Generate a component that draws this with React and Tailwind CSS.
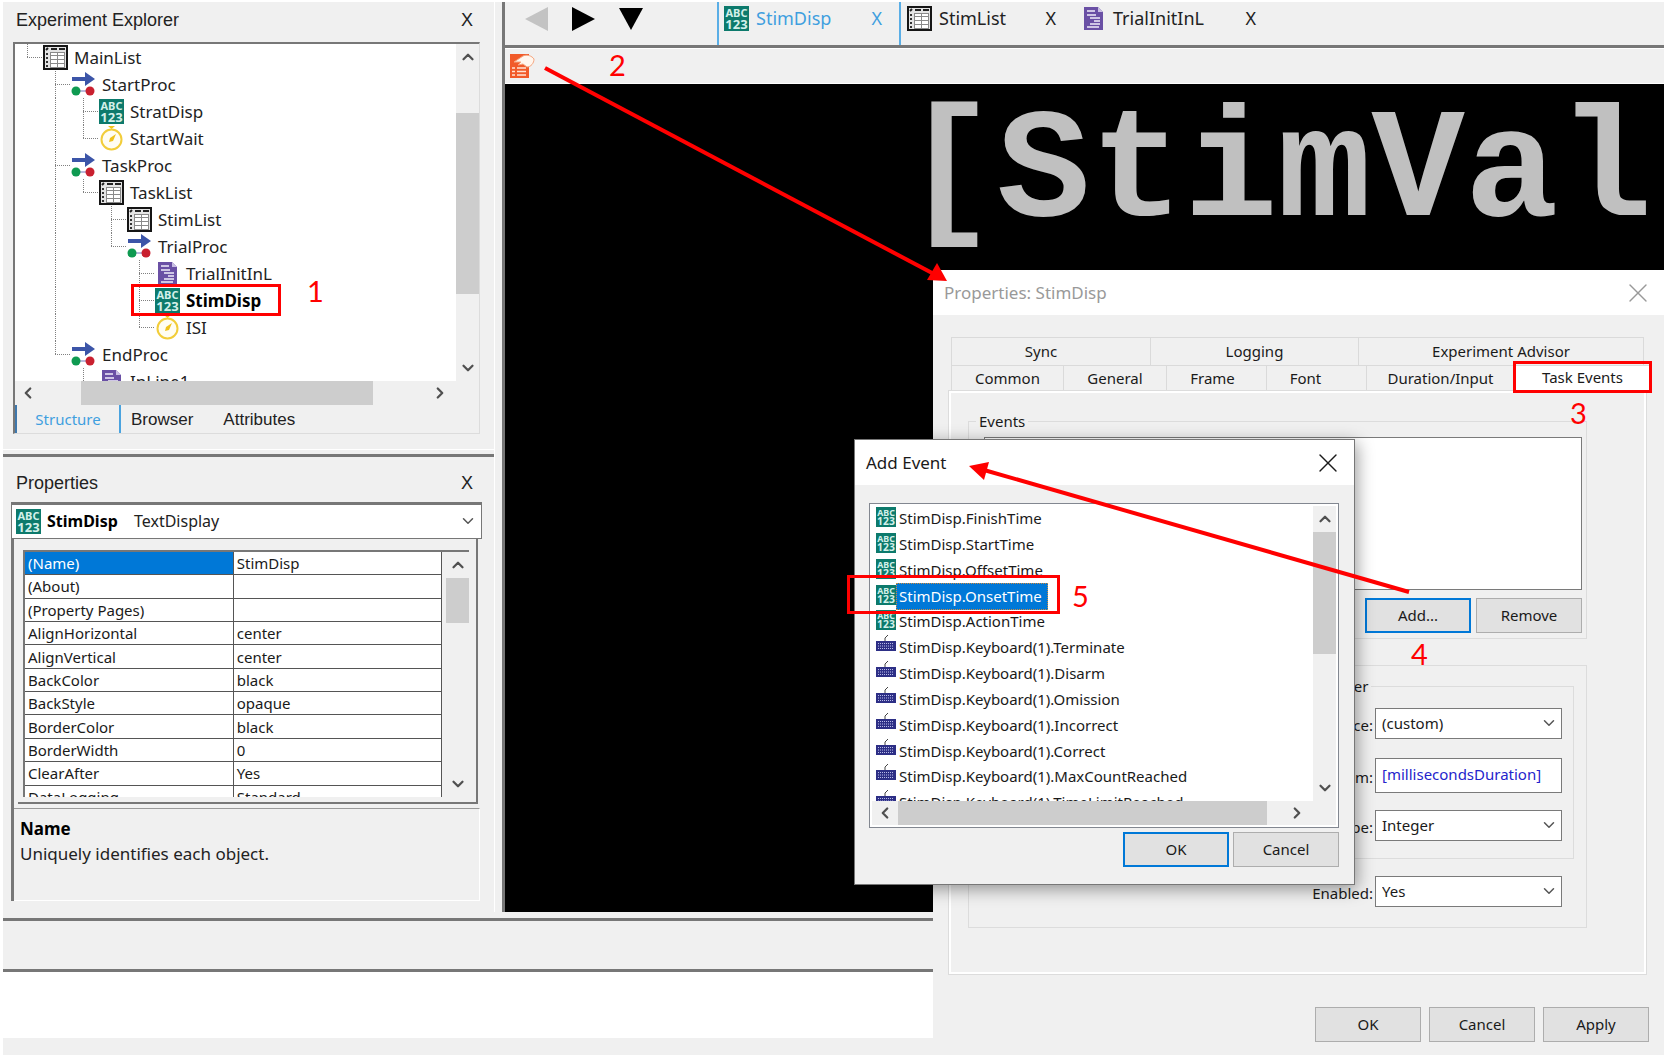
import React from "react";
import { ChevronDown, ChevronLeft, ChevronRight, ChevronUp, X } from "lucide-react";

const treeRows = [
  { name: "MainList", icon: "list", guides: "L" },
  { name: "StartProc", icon: "proc", guides: " T" },
  { name: "StratDisp", icon: "text", guides: " IT" },
  { name: "StartWait", icon: "wait", guides: " IL" },
  { name: "TaskProc", icon: "proc", guides: " T" },
  { name: "TaskList", icon: "list", guides: " IL" },
  { name: "StimList", icon: "list", guides: " I T" },
  { name: "TrialProc", icon: "proc", guides: " I L" },
  { name: "TrialInitInL", icon: "inline", guides: " I  T" },
  { name: "StimDisp", icon: "text", guides: " I  T", selected: true },
  { name: "ISI", icon: "wait", guides: " I  L" },
  { name: "EndProc", icon: "proc", guides: " L" },
  { name: "InLine1", icon: "inline", guides: "  L" },
];

const properties = [
  ["(Name)", "StimDisp"],
  ["(About)", ""],
  ["(Property Pages)", ""],
  ["AlignHorizontal", "center"],
  ["AlignVertical", "center"],
  ["BackColor", "black"],
  ["BackStyle", "opaque"],
  ["BorderColor", "black"],
  ["BorderWidth", "0"],
  ["ClearAfter", "Yes"],
  ["DataLogging", "Standard"],
];

const events = [
  "FinishTime",
  "StartTime",
  "OffsetTime",
  "OnsetTime",
  "ActionTime",
  "Keyboard(1).Terminate",
  "Keyboard(1).Disarm",
  "Keyboard(1).Omission",
  "Keyboard(1).Incorrect",
  "Keyboard(1).Correct",
  "Keyboard(1).MaxCountReached",
  "Keyboard(1).TimeLimitReached",
];

/* ---------- icons ---------- */

const TextIcon = ({ className = "size-[25px]" }) => (
  <svg viewBox="0 0 25 25" className={`${className} shrink-0`} aria-hidden="true">
    <rect width="25" height="25" fill="#0d7a6c" />
    <g fill="#d3f0ea" fontFamily="Noto Sans, sans-serif" fontWeight="700" textAnchor="middle">
      <text x="12.5" y="11" fontSize="11">ABC</text>
      <text x="12.5" y="23" fontSize="13">123</text>
    </g>
  </svg>
);

const ListIcon = () => (
  <svg viewBox="0 0 25 25" className="size-[25px] shrink-0" aria-hidden="true">
    <rect x="1" y="1" width="23" height="23" fill="#e4e4e4" stroke="#151515" strokeWidth="2" />
    <path d="M3 5l2-2M8 4h6M16 4h6" stroke="#222" strokeWidth="2" />
    <path d="M4 8v15" stroke="#333" strokeWidth="2" strokeDasharray="2 2" />
    <rect x="7" y="7" width="15" height="16" fill="#8a8a8a" />
    <path
      d="M8 8h6v2h-6zM15 8h6v2h-6zM8 11h6v3h-6zM15 11h6v3h-6zM8 15h6v3h-6zM15 15h6v3h-6zM8 19h6v3h-6zM15 19h6v3h-6z"
      fill="#fff"
    />
  </svg>
);

const ProcIcon = () => (
  <svg viewBox="0 0 25 25" className="size-[25px] shrink-0" aria-hidden="true">
    <path d="M1 5h13V0l10 7l-10 7V9H1z" fill="#3c55a8" />
    <path d="M5 19h14" stroke="#b9b9dd" strokeWidth="2" />
    <circle cx="5" cy="19" r="4.500" fill="#0f9a51" />
    <circle cx="19" cy="19" r="4.500" fill="#c9202f" />
  </svg>
);

const WaitIcon = () => (
  <svg viewBox="0 0 25 25" className="size-[25px] shrink-0" aria-hidden="true">
    <path d="M9 0h7l-3.500 3z" fill="#f0c419" />
    <circle cx="12.500" cy="13.500" r="10" fill="#fffdf2" stroke="#f2cd3a" strokeWidth="2" />
    <path d="M17 8l-3 7l-4 1l1-4z" fill="#efc21b" />
  </svg>
);

const InlineIcon = () => (
  <svg viewBox="0 0 25 25" className="size-[25px] shrink-0" aria-hidden="true">
    <path d="M3 1h14l5 5v18H3z" fill="#6a50a5" />
    <path d="M17 1v5h5z" fill="#c9bfe3" />
    <path d="M6 5h8M6 9h9M9 12h10M13 15h6M9 18h10M6 21h12" stroke="#f1edfa" strokeWidth="1.500" />
  </svg>
);

const KeyboardIcon = () => (
  <svg viewBox="0 0 20 20" className="size-5 shrink-0" aria-hidden="true">
    <path d="M9 6V3l3-3" fill="none" stroke="#444" />
    <rect y="6" width="20" height="10" fill="#2d2f86" />
    <path d="M2 8.500h16M2 11h16M2 13.500h16" stroke="#b9bbe8" strokeDasharray="1 1" />
  </svg>
);

const PagesIcon = () => (
  <svg viewBox="0 0 26 26" className="size-[26px] shrink-0" aria-hidden="true">
    <path d="M1 1h19v24H1z" fill="#f15a29" />
    <path d="M5 9l9-6c4-2 9 0 11 3c0 4-3 8-7 8l-4-3l-5 1l3-3z" fill="#fff6ee" stroke="#f5a57f" />
    <path d="M3 15h3M8 15h9M3 18.500h3M8 18.500h9M3 22h3M8 22h9" stroke="#ffe3d3" strokeWidth="1.500" />
  </svg>
);

const icons = { list: ListIcon, proc: ProcIcon, text: TextIcon, wait: WaitIcon, inline: InlineIcon };

/* ---------- shared parts ---------- */

const VScroll = ({ thumb }) => (
  <div className="flex w-[23px] shrink-0 flex-col items-center bg-[#f0f0f0] text-[#505050]">
    <button aria-label="Scroll up" className="flex h-[26px] items-center">
      <ChevronUp size={18} strokeWidth={3} />
    </button>
    <div className="w-full flex-1">
      <div className={`w-full bg-[#cdcdcd] ${thumb}`} />
    </div>
    <button aria-label="Scroll down" className="flex h-[26px] items-center">
      <ChevronDown size={18} strokeWidth={3} />
    </button>
  </div>
);

const HScroll = ({ thumb }) => (
  <div className="flex h-6 items-center bg-[#f0f0f0] pr-[26px] text-[#505050]">
    <button aria-label="Scroll left" className="flex w-[26px] justify-center">
      <ChevronLeft size={18} strokeWidth={3} />
    </button>
    <div className="h-full flex-1">
      <div className={`h-full bg-[#cdcdcd] ${thumb}`} />
    </div>
    <button aria-label="Scroll right" className="flex w-[26px] justify-center">
      <ChevronRight size={18} strokeWidth={3} />
    </button>
  </div>
);

const Button = ({ children, primary }) => (
  <button
    className={`h-[35px] w-[106px] bg-[#e1e1e1] text-[15px] ${
      primary ? "border-2 border-[#0078d7]" : "border border-[#adadad]"
    }`}
  >
    {children}
  </button>
);

const Guide = ({ kind }) => (
  <svg viewBox="0 0 28 27" className="h-[27px] w-7 shrink-0" aria-hidden="true">
    <g stroke="#808080" strokeDasharray="1 1">
      {kind !== " " && <path d={kind === "L" ? "M12.500 0v14" : "M12.500 0v27"} />}
      {(kind === "T" || kind === "L") && <path d="M12 13.500h16" />}
    </g>
  </svg>
);

const PanelTitle = ({ children, className }) => (
  <div className={`flex items-center justify-between pr-[21px] pl-[13px] font-['Liberation_Sans',sans-serif] text-[18px] ${className}`}>
    <h2>{children}</h2>
    <button aria-label={`Close ${children}`}>X</button>
  </div>
);

/* ---------- left column ---------- */

const Explorer = () => (
  <section className="border-b border-white pb-[15px]">
    <PanelTitle className="h-10 pb-1">Experiment Explorer</PanelTitle>
    <div className="mr-[14px] ml-[10px] border-t-2 border-r border-b border-l-2 border-t-[#777] border-r-[#dcdcdc] border-b-[#dcdcdc] border-l-[#777]">
      <div className="flex h-[337px] bg-white">
        <ul className="flex-1 overflow-hidden text-[17px]">
          {treeRows.map((row) => {
            const Icon = icons[row.icon];
            return (
              <li key={row.name} className="flex h-[27px] items-center">
                {row.guides.split("").map((kind, i) => (
                  <Guide key={i} kind={kind} />
                ))}
                <Icon />
                <span className={`pl-[6px] ${row.selected ? "font-bold text-black" : ""}`}>{row.name}</span>
              </li>
            );
          })}
        </ul>
        <VScroll thumb="mt-[43px] h-[181px]" />
      </div>
      <HScroll thumb="ml-10 w-[292px]" />
      <div className="flex h-7 items-center font-['Liberation_Sans',sans-serif] text-[17px]">
        <button className="h-full w-[106px] border-r-2 border-l-2 border-r-[#4aa3df] border-l-[#3f78ad] font-['Noto_Sans',sans-serif] text-[15px] text-[#3f9fdf]">
          Structure
        </button>
        <button className="pt-[2px] pl-[10px]">Browser</button>
        <button className="pt-[2px] pl-[30px]">Attributes</button>
      </div>
    </div>
  </section>
);

const PropertiesPanel = () => (
  <section className="mt-1 border-t-3 border-[#777]">
    <PanelTitle className="h-[45px] pt-2">Properties</PanelTitle>
    <div className="mr-3 ml-2 border-t-2 border-[#777]">
      <div className="relative flex h-[35px] items-center border border-[#777] bg-white px-1 pb-px text-[16px]">
        <TextIcon />
        <label htmlFor="object" className="pl-[6px]">
          <b className="pr-3 text-black">StimDisp</b> TextDisplay
        </label>
        <ChevronDown size={18} className="ml-auto text-[#555]" />
        <select id="object" className="absolute inset-0 w-full opacity-0">
          <option>StimDisp TextDisplay</option>
        </select>
      </div>
      <div className="border-l-3 border-[#777]">
        <div className="mr-1 ml-1 border-r-2 border-b-2 border-[#777] pt-[11px] pr-[7px] pb-[5px] pl-[5px]">
          <div className="flex h-[247px] overflow-hidden border-t-2 border-l-2 border-[#777]">
            <div className="flex-1 overflow-hidden">
              <table className="h-[257px] w-full table-fixed border-collapse bg-white text-[15px] leading-5 text-[#1a1a1a]">
                <tbody>
                  {properties.map(([name, value], i) => (
                    <tr key={name}>
                      <th
                        scope="row"
                        className={`border-r border-b border-[#555] px-[3px] py-0 text-left font-normal ${
                          i === 0 ? "bg-[#0078d7] text-white" : ""
                        }`}
                      >
                        {name}
                      </th>
                      <td className="border-r border-b border-[#555] px-[3px] py-0">{value}</td>
                    </tr>
                  ))}
                </tbody>
              </table>
            </div>
            <div className="ml-1 flex">
              <VScroll thumb="h-[45px]" />
            </div>
          </div>
        </div>
        <div className="mt-1 mr-[2px] h-[93px] border-t border-r border-b border-t-[#999] border-r-white border-b-white px-[6px] pt-[7px] text-[17px] leading-[25px]">
          <p className="font-bold text-black">Name</p>
          <p>Uniquely identifies each object.</p>
        </div>
      </div>
    </div>
  </section>
);

/* ---------- editor ---------- */

const Editor = () => (
  <main className="flex flex-1 flex-col border-l-3 border-[#777]">
    <nav className="flex h-[46px] items-stretch border-b-3 border-[#777] text-[18px]">
      <div className="flex w-[212px] items-center gap-[23px] pb-[10px] pl-5">
        <button aria-label="Back">
          <svg viewBox="0 0 24 24" className="size-6" fill="#c3c3c3"><path d="M23 0v24L0 12z" /></svg>
        </button>
        <button aria-label="Forward">
          <svg viewBox="0 0 24 24" className="size-6" fill="#000"><path d="M0 0v24l23-12z" /></svg>
        </button>
        <button aria-label="Window list">
          <svg viewBox="0 0 24 24" className="size-6" fill="#000"><path d="M0 1h24L12 23z" /></svg>
        </button>
      </div>
      <div className="flex w-[184px] items-center border-x-2 border-[#5aaee6] pr-[17px] pb-[10px] pl-[5px] text-[#3f9fdf]">
        <TextIcon />
        <a href="#stimdisp" className="pl-[7px]">StimDisp</a>
        <button className="ml-auto" aria-label="Close StimDisp">X</button>
      </div>
      <div className="flex w-[175px] items-center pr-5 pb-[10px] pl-[6px]">
        <ListIcon />
        <a href="#stimlist" className="pl-[7px]">StimList</a>
        <button className="ml-auto" aria-label="Close StimList">X</button>
      </div>
      <div className="flex w-[180px] items-center pb-[10px] pl-[5px]">
        <InlineIcon />
        <a href="#trialinit" className="pl-[7px]">TrialInitInL</a>
        <button className="ml-auto" aria-label="Close TrialInitInL">X</button>
      </div>
    </nav>
    <div className="flex h-9 items-center border-t border-b border-white pl-1">
      <button aria-label="Property pages">
        <PagesIcon />
      </button>
    </div>
    <div className="flex-1 overflow-hidden bg-black pt-[10px] pr-3 text-right font-['Liberation_Mono',monospace] text-[156px] leading-[160px] font-bold text-[#c0c0c0]">
      [StimVal
    </div>
  </main>
);

/* ---------- dialogs ---------- */

const SelectField = ({ id, label, value, className = "" }) => (
  <div className={`flex items-center justify-end ${className}`}>
    <label htmlFor={id} className="pt-1 pr-[2px]">{label}</label>
    <div className="relative w-[187px]">
      <select id={id} className="h-[31px] w-full appearance-none border border-[#7a7a7a] bg-white pl-[6px]">
        <option>{value}</option>
      </select>
      <ChevronDown size={18} className="pointer-events-none absolute top-[6px] right-1 text-[#555]" />
    </div>
  </div>
);

const Tab = ({ children, className }) => (
  <button className={`border-r border-[#dadada] ${className}`}>{children}</button>
);

const PropertiesDialog = () => (
  <div
    role="dialog"
    aria-label="Properties: StimDisp"
    className="absolute top-[270px] right-1 left-[933px] bg-[#f0f0f0] text-[15px] text-[#1a1a1a]"
  >
    <div className="flex h-[45px] items-center justify-between bg-white pr-[10px] pl-[11px] text-[17px] text-[#999]">
      <h2>Properties: StimDisp</h2>
      <button aria-label="Close">
        <X size={32} strokeWidth={1} />
      </button>
    </div>
    <div className="mt-[22px] mr-[20px] ml-[18px] flex h-7 border-t border-l border-[#dadada]">
      <Tab className="w-[199px] pr-5">Sync</Tab>
      <Tab className="w-[208px]">Logging</Tab>
      <Tab className="flex-1">Experiment Advisor</Tab>
    </div>
    <div className="mr-[14px] ml-[18px] flex h-[26px] border-t border-l border-[#dadada]">
      <Tab className="w-[112px]">Common</Tab>
      <Tab className="w-[103px]">General</Tab>
      <Tab className="w-[100px] pr-2">Frame</Tab>
      <Tab className="w-[100px] pr-[22px]">Font</Tab>
      <Tab className="w-[148px]">Duration/Input</Tab>
      <button className="flex-1 bg-white pb-1">Task Events</button>
    </div>
    <div className="mr-[18px] ml-4 border-2 border-white px-[17px] pt-[18px] pb-[44px] outline outline-[#dcdcdc]">
      <fieldset className="mr-10 border border-[#dcdcdc] pr-[4px] pb-[5px] pl-[15px]">
        <legend className="-ml-[8px] px-[3px] leading-5">Events</legend>
        <div className="mt-[6px] h-[153px] border border-[#7a7a7a] bg-white" />
        <div className="mt-2 flex justify-end gap-[5px]">
          <Button primary>Add...</Button>
          <Button>Remove</Button>
        </div>
      </fieldset>
      <fieldset aria-label="Task event" className="mt-[26px] mr-10 border border-[#dcdcdc] pt-[10px] pb-[20px]">
        <fieldset className="mr-3 ml-auto w-[300px] border border-[#dcdcdc] pt-[12px] pr-[11px] pb-[17px]">
          <legend className="ml-[16px] px-[3px] leading-5">Parameter</legend>
          <SelectField id="source" label="Source:" value="(custom)" />
          <div className="mt-[19px] flex items-center justify-end">
            <label htmlFor="custom" className="pt-1 pr-[2px]">Custom:</label>
            <input
              id="custom"
              defaultValue="[millisecondsDuration]"
              className="h-[35px] w-[187px] border border-[#7a7a7a] bg-white pb-1 pl-[6px] text-[#2424cc]"
            />
          </div>
          <SelectField id="type" label="Type:" value="Integer" className="mt-[17px]" />
        </fieldset>
        <SelectField id="enabled" label="Enabled:" value="Yes" className="mt-[17px] pr-6" />
      </fieldset>
    </div>
    <div className="flex justify-end gap-2 pt-[33px] pr-[15px] pb-[13px]">
      <Button>OK</Button>
      <Button>Cancel</Button>
      <Button>Apply</Button>
    </div>
  </div>
);

const AddEventDialog = () => (
  <div
    role="dialog"
    aria-label="Add Event"
    className="absolute top-[439px] left-[854px] w-[501px] border border-[#777] bg-[#f0f0f0] text-[#1a1a1a] shadow-[2px_4px_16px_rgba(0,0,0,0.4)]"
  >
    <div className="flex h-[45px] items-center justify-between bg-white pr-[10px] pl-[11px] text-[17px]">
      <h2>Add Event</h2>
      <button aria-label="Close">
        <X size={32} strokeWidth={1} />
      </button>
    </div>
    <div className="mr-[15px] ml-[14px] mt-[18px] border border-[#828790] bg-white p-[2px]">
      <div className="flex h-[295px]">
        <div className="flex-1 overflow-hidden">
          <ul className="grid h-[310px] grid-rows-12 text-[15px]">
            {events.map((event, i) => (
              <li key={event} className="flex items-start pl-1">
                {i < 5 ? <TextIcon className="mt-px size-5" /> : <KeyboardIcon />}
                <span
                  className={`px-[3px] leading-[25px] ${
                    i === 3 ? "-my-px border border-dotted border-[#d08a3c] bg-[#0078d7] pr-[5px] pl-[2px] text-white" : ""
                  }`}
                >
                  StimDisp.{event}
                </span>
              </li>
            ))}
          </ul>
        </div>
        <VScroll thumb="h-[122px]" />
      </div>
      <HScroll thumb="w-[369px]" />
    </div>
    <div className="mr-[15px] ml-[14px] mt-1 flex justify-end gap-1 pb-[17px]">
      <Button primary>OK</Button>
      <Button>Cancel</Button>
    </div>
  </div>
);

/* ---------- tutorial marks drawn over the windows ---------- */

const Annotations = () => (
  <div className="pointer-events-none absolute inset-0 overflow-hidden font-['Lato',sans-serif] text-[29px] leading-7 text-[#f00]">
    <svg width="1668" height="1056" viewBox="0 0 1668 1056" className="absolute top-0 left-0 max-w-none" aria-hidden="true">
      <g stroke="#f00" strokeWidth="4">
        <path d="M545 68L934 274" />
        <path d="M1409 592L984 470" />
      </g>
      <g fill="#f00">
        <path d="M947 281l-20-1l10-17z" />
        <path d="M969 466l20-4l-5 18z" />
      </g>
    </svg>
    <div className="absolute top-[284px] left-[131px] h-8 w-[150px] border-3 border-[#f00]" />
    <div className="absolute top-[361px] left-[1513px] h-8 w-[139px] border-3 border-[#f00]" />
    <div className="absolute top-[575px] left-[847px] h-[39px] w-[213px] border-3 border-[#f00]" />
    <span className="absolute top-[277px] left-[307px]">1</span>
    <span className="absolute top-[51px] left-[609px]">2</span>
    <span className="absolute top-[399px] left-[1570px]">3</span>
    <span className="absolute top-[640px] left-[1411px]">4</span>
    <span className="absolute top-[582px] left-[1072px]">5</span>
  </div>
);

const App = () => {
  return (
    <div className="relative flex min-h-screen flex-col bg-white pt-[2px] pr-1 pb-px pl-[3px] font-['Noto_Sans',sans-serif] text-[#222]">
      <div className="flex h-[910px] bg-[#f0f0f0]">
        <div className="mr-[7px] w-[492px] shrink-0 border-r border-white">
          <Explorer />
          <PropertiesPanel />
        </div>
        <Editor />
      </div>
      <div className="h-[60px] border-b-3 border-[#777] bg-[#f0f0f0] pt-[6px]">
        <div className="border-t-3 border-[#777]" />
      </div>
      <div className="h-[66px] bg-white" />
      <div className="flex-1 bg-[#f0f0f0]" />
      <PropertiesDialog />
      <AddEventDialog />
      <Annotations />
    </div>
  );
};

export default App;
